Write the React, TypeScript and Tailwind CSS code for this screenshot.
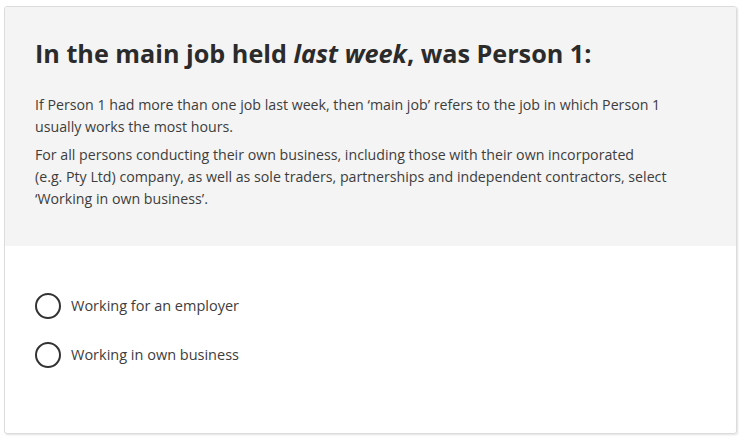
import React from 'react';

const options = ['Working for an employer', 'Working in own business'];

export default function App() {
  return (
    <div className="w-[745px] h-[440px] bg-white pl-[4px] pr-[8px] pt-[6px] pb-[6px] font-['Open_Sans',sans-serif]">
      <div className="h-full flex flex-col border border-[#dcdcdc] rounded-[3px] shadow-[1px_1px_2px_rgba(0,0,0,0.12)] overflow-hidden">
        {/* Question header */}
        <div className="bg-[#f4f4f4] h-[239px] shrink-0 pl-[30px] pr-[36px] pt-[30px]">
          <h1 className="text-[25.2px] leading-[32px] font-bold text-[#2b2b2b]">
            In the main job held <em className="italic">last week</em>, was Person 1:
          </h1>
          <p className="mt-[25px] text-[14.2px] leading-[22px] text-[#3d3d3d]">
            If Person 1 had more than one job last week, then ‘main job’ refers to the job in which Person 1 usually works the most hours.
          </p>
          <p className="mt-[6px] text-[14.2px] leading-[22px] text-[#3d3d3d]">
            For all persons conducting their own business, including those with their own incorporated
            <br />
            (e.g. Pty Ltd) company, as well as sole traders, partnerships and independent contractors, select
            <br />
            ‘Working in own business’.
          </p>
        </div>

        {/* Answers */}
        <div className="flex flex-col gap-[23px] pl-[30px] pt-[47px]">
          {options.map(o => (
            <label key={o} className="flex items-center gap-[10px] cursor-pointer">
              <span className="w-[26px] h-[26px] rounded-full border-2 border-[#333] bg-white shrink-0" />
              <span className="text-[14.5px] leading-[26px] text-[#3d3d3d]">{o}</span>
            </label>
          ))}
        </div>
      </div>
    </div>
  );
}
